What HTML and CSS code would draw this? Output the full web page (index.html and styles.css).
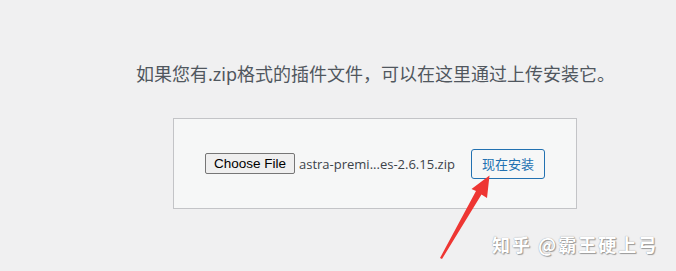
FILE: index.html
```html
<!DOCTYPE html>
<html lang="zh-CN">
<head>
<meta charset="utf-8">
<link rel="stylesheet" href="styles.css">
</head>
<body>
<div class="page">
  <p class="install-help">如果您有.zip格式的插件文件，可以在这里通过上传安装它。</p>
  <div class="upload-box">
    <div class="upload-row">
      <div class="file-input">
        <span class="choose-btn">Choose File</span>
        <span class="file-name">astra-premi...es-2.6.15.zip</span>
      </div>
      <span class="install-btn">现在安装</span>
    </div>
  </div>
</div>
<svg class="arrow" width="676" height="271" viewBox="0 0 676 271">
  <polygon points="489.5,175.5 487,198 481.5,194.5 442,259 440,258 476,191 471.5,189" fill="#ee3633"/>
</svg>
<div class="watermark">知乎 @霸王硬上弓</div>
</body>
</html>
```
FILE: styles.css
```css
html, body {
  margin: 0;
  padding: 0;
  width: 676px;
  height: 271px;
  overflow: hidden;
  background: #f0f0f1;
}

.page {
  padding-top: 62px;
}

.install-help {
  margin: 0 0 32px 136px;
  font-family: "Noto Sans", "Noto Sans CJK SC", sans-serif;
  font-size: 18px;
  line-height: 24px;
  color: #50575e;
  white-space: nowrap;
}

.upload-box {
  margin-left: 173px;
  width: 342px;
  padding: 30px;
  border: 1px solid #c3c4c7;
  background: #f6f7f7;
}

.upload-row {
  display: flex;
  align-items: center;
  height: 29px;
}

.file-input {
  display: flex;
  align-items: center;
  margin-left: 1px;
  width: 266px;
}

.choose-btn {
  box-sizing: border-box;
  width: 90px;
  height: 21px;
  border: 1px solid #767676;
  border-radius: 2px;
  background: #efefef;
  font-family: "Liberation Sans", Arial, sans-serif;
  font-size: 13.5px;
  line-height: 19px;
  text-align: center;
  color: #000;
}

.file-name {
  margin-left: 4px;
  font-family: "Open Sans", "Noto Sans", sans-serif;
  font-size: 13px;
  color: #3c434a;
  white-space: nowrap;
}

.install-btn {
  box-sizing: border-box;
  width: 74px;
  height: 30px;
  border: 1px solid #2271b1;
  border-radius: 3px;
  background: #f6f7f7;
  color: #2271b1;
  font-family: "Noto Sans CJK SC", sans-serif;
  font-size: 13px;
  line-height: 28px;
  text-align: center;
}

.arrow {
  position: absolute;
  left: 0;
  top: 0;
}

.watermark {
  position: absolute;
  left: 492px;
  top: 232px;
  font-family: "Noto Sans CJK SC", sans-serif;
  font-size: 18px;
  line-height: 24px;
  font-weight: 700;
  color: #ffffff;
  letter-spacing: 2px;
  text-shadow: 0 0 1px #8a8a8a, 1px 1px 1px #9a9a9a;
}
```
